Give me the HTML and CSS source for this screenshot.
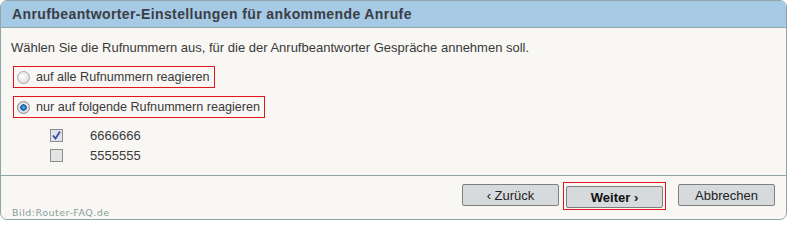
FILE: index.html
```html
<!DOCTYPE html>
<html lang="de">
<head>
<meta charset="utf-8">
<title>Anrufbeantworter</title>
<link rel="stylesheet" href="styles.css">
</head>
<body>
<div class="panel">
  <div class="header">Anrufbeantworter-Einstellungen für ankommende Anrufe</div>
  <div class="content">
    <p class="intro">Wählen Sie die Rufnummern aus, für die der Anrufbeantworter Gespräche annehmen soll.</p>
    <div class="option option-first"><span class="radio"></span><span class="label">auf alle Rufnummern reagieren</span></div>
    <div class="option option-second"><span class="radio radio-on"></span><span class="label">nur auf folgende Rufnummern reagieren</span></div>
    <div class="numbers">
      <div class="num-row"><span class="check check-on"><svg width="9" height="9" viewBox="0 0 9 9"><path d="M1 4.5 L3.5 7.5 L8 0.5" fill="none" stroke="#3a4f9a" stroke-width="1.8"/></svg></span><span class="num">6666666</span></div>
      <div class="num-row"><span class="check"></span><span class="num">5555555</span></div>
    </div>
  </div>
  <div class="footer">
    <button class="btn">&lsaquo; Zurück</button>
    <span class="highlight"><button class="btn btn-primary">Weiter &rsaquo;</button></span>
    <button class="btn btn-cancel">Abbrechen</button>
  </div>
  <div class="watermark">Bild:Router-FAQ.de</div>
</div>
</body>
</html>
```
FILE: styles.css
```css
html, body {
  margin: 0;
  padding: 0;
  background: #ffffff;
}
body {
  font-family: "Liberation Sans", Arial, sans-serif;
  color: #3a3a3a;
}
.panel {
  position: relative;
  width: 785px;
  height: 218px;
  border: 1px solid #8ea6a6;
  border-radius: 7px;
  background: #f8f7f3;
  overflow: hidden;
  display: flex;
  flex-direction: column;
}
.header {
  height: 26px;
  line-height: 26px;
  background: #a6c9e6;
  border-bottom: 1px solid #8ea6a6;
  padding-left: 11px;
  font-size: 14px;
  font-weight: bold;
  letter-spacing: 0.4px;
  color: #3a3e44;
}
.content {
  flex: 1;
  padding: 0 0 0 12px;
  font-size: 13px;
}
.intro {
  margin: 12px 0 0 -2px;
  line-height: 15px;
}
.option {
  display: flex;
  width: fit-content;
  align-items: center;
  height: 20px;
  border: 1px solid #e0161a;
  padding: 0 4px 0 3px;
  gap: 6px;
  box-sizing: content-box;
}
.option-first { margin-top: 11px; }
.option-second { margin-top: 8px; }
.label {
  line-height: 20px;
  font-size: 12.6px;
}
.radio {
  width: 11px;
  height: 11px;
  border-radius: 50%;
  border: 1px solid #a8a8a8;
  background: radial-gradient(circle at 40% 40%, #ffffff 0%, #e6e6e6 60%, #c8c8c8 100%);
}
.radio-on {
  border-color: #8c8c8c;
  background: radial-gradient(circle at 50% 50%, #5fb0e8 0%, #1a6fb8 30%, #0d4f8f 38%, #e8e8e8 45%, #d0d0d0 80%, #bbbbbb 100%);
}
.numbers {
  margin-top: 11px;
  padding-left: 37px;
  display: flex;
  flex-direction: column;
  gap: 7px;
}
.num-row {
  display: flex;
  align-items: center;
  height: 13px;
}
.check {
  width: 11px;
  height: 11px;
  border: 1px solid #8d8d8d;
  background: #e2e4e6;
  display: flex;
  align-items: center;
  justify-content: center;
}
.check-on { background: #dfe2ea; }
.num {
  margin-left: 27px;
  font-size: 13px;
}
.footer {
  height: 44px;
  border-top: 1px solid #8ea6a6;
  display: flex;
  justify-content: flex-end;
  align-items: flex-start;
  padding: 6px 11px 0 0;
  box-sizing: border-box;
}
.btn {
  width: 97px;
  height: 22px;
  border: 1px solid #7f7f7f;
  border-radius: 2px;
  background: #d6dadc;
  font-family: "Liberation Sans", Arial, sans-serif;
  font-size: 13px;
  color: #222222;
  padding: 0;
  margin: 0;
}
.btn:first-child { margin-top: 2px; }
.highlight {
  display: block;
  margin-left: 4px;
  padding: 1px 2px;
  border: 1px solid #e0161a;
}
.btn-primary {
  display: block;
  font-weight: bold;
  color: #111111;
}
.btn-cancel {
  margin-left: 12px;
  margin-top: 2px;
}
.watermark {
  position: absolute;
  left: 11px;
  bottom: 1px;
  font-family: "DejaVu Sans", sans-serif;
  font-size: 9.5px;
  color: #8a9e9e;
  letter-spacing: 0.5px;
}
```
